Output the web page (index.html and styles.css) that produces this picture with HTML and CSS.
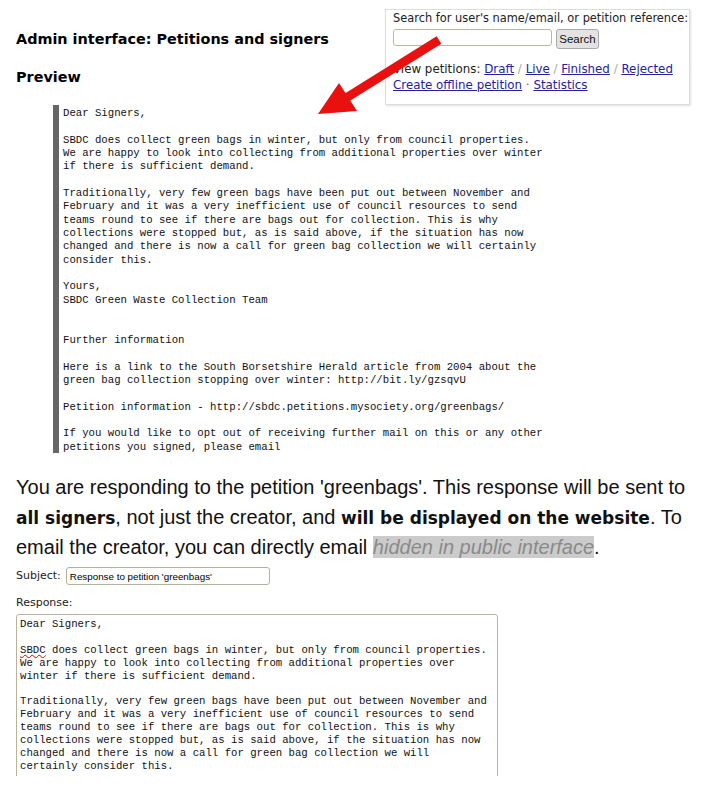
FILE: index.html
```
<!DOCTYPE html>
<html lang="en">
<head>
<meta charset="utf-8">
<title>Admin interface: Petitions and signers</title>
<link rel="stylesheet" href="styles.css">
</head>
<body>
<div class="page">
  <header class="top">
    <div class="titles">
      <h1 class="title">Admin interface: Petitions and signers</h1>
      <h2 class="subtitle">Preview</h2>
    </div>
    <div class="adminbox">
      <form class="search">
        <label class="search-label">Search for user's name/email, or petition reference:</label>
        <div class="search-row">
          <input class="search-input" type="text">
          <button class="search-btn" type="button">Search</button>
        </div>
      </form>
      <p class="nav">View petitions: <a href="#">Draft</a> <span class="sep">/</span> <a href="#">Live</a> <span class="sep">/</span> <a href="#">Finished</a> <span class="sep">/</span> <a href="#">Rejected</a></p>
      <p class="nav"><a href="#">Create offline petition</a> <span class="dot">&middot;</span> <a href="#">Statistics</a></p>
    </div>
  </header>

  <pre class="preview">Dear Signers,

SBDC does collect green bags in winter, but only from council properties.
We are happy to look into collecting from additional properties over winter
if there is sufficient demand.

Traditionally, very few green bags have been put out between November and
February and it was a very inefficient use of council resources to send
teams round to see if there are bags out for collection. This is why
collections were stopped but, as is said above, if the situation has now
changed and there is now a call for green bag collection we will certainly
consider this.

Yours,
SBDC Green Waste Collection Team


Further information

Here is a link to the South Borsetshire Herald article from 2004 about the
green bag collection stopping over winter: http://bit.ly/gzsqvU

Petition information - http://sbdc.petitions.mysociety.org/greenbags/

If you would like to opt out of receiving further mail on this or any other
petitions you signed, please email
</pre>

  <p class="intro">You are responding to the petition 'greenbags'. This response will be sent to <strong>all signers</strong>, not just the creator, and <strong>will be displayed on the website</strong>. To email the creator, you can directly email <em class="hidden">hidden in public interface</em>.</p>

  <div class="field-row">
    <label class="field-label">Subject:</label>
    <input class="subject-input" type="text" value="Response to petition 'greenbags'">
  </div>
  <label class="field-label resp-label">Response:</label>
  <div class="resp-clip">
    <div class="resp-area">Dear Signers,

<span class="spell">SBDC</span> does collect green bags in winter, but only from council properties.
We are happy to look into collecting from additional properties over
winter if there is sufficient demand.

Traditionally, very few green bags have been put out between November and
February and it was a very inefficient use of council resources to send
teams round to see if there are bags out for collection. This is why
collections were stopped but, as is said above, if the situation has now
changed and there is now a call for green bag collection we will
certainly consider this.

Yours,
SBDC Green Waste Collection Team</div>
  </div>

  <svg class="arrow" width="709" height="130" viewBox="0 0 709 130">
    <line x1="346" y1="98" x2="439" y2="40" stroke="#ea1010" stroke-width="9"/>
    <polygon points="318,114 339,83 357,111" fill="#ea1010"/>
  </svg>
</div>
</body>
</html>
```
FILE: styles.css
```
* { box-sizing: border-box; }

body {
  margin: 0;
  background: #fff;
  color: #000;
  font-family: "DejaVu Sans", sans-serif;
}

.page {
  position: relative;
  padding: 0 19px 0 16px;
  width: 709px;
}

.top {
  display: flex;
  justify-content: space-between;
  align-items: flex-start;
}

.title, .subtitle {
  font-family: "DejaVu Sans", sans-serif;
  font-weight: bold;
  font-size: 14.4px;
  line-height: 18px;
  margin: 0;
}

.title { margin-top: 30px; }
.subtitle { margin-top: 20px; }

.adminbox {
  margin-top: 9px;
  width: 305px;
  height: 96px;
  border: 1px solid #dcdcdc;
  box-shadow: 1px 1px 2px rgba(0,0,0,0.12);
  padding: 1px 0 0 7px;
  font-size: 11.4px;
  color: #222;
  overflow: hidden;
}

.search { margin: 0; }

.search-label {
  display: block;
  line-height: 15px;
  white-space: nowrap;
}

.search-row {
  display: flex;
  align-items: flex-start;
  gap: 4px;
  margin-top: 3px;
}

.search-input {
  width: 159px;
  height: 17px;
  border: 1px solid #b9b9a2;
  border-radius: 3px;
  padding: 0 3px;
  margin: 0;
  background: #fff;
}

.search-btn {
  width: 43px;
  height: 20px;
  margin: 0;
  padding: 0;
  font-family: "Liberation Sans", Arial, sans-serif;
  font-size: 11.5px;
  color: #111;
  background: #e3e3e3;
  border: 1px solid #a9a9a9;
  border-radius: 3px;
}

.nav {
  margin: 0;
  font-size: 11.85px;
  line-height: 16px;
  white-space: nowrap;
}

.nav:first-of-type { margin-top: 12px; }

.nav a {
  color: #23239c;
  text-decoration: underline;
}

.sep { color: #aaa; }
.dot { color: #777; }

.preview {
  margin: 0 0 0 37px;
  height: 348px;
  overflow: hidden;
  border-left: 6px solid #666;
  padding: 2px 0 0 4px;
  font-family: "Liberation Mono", "Courier New", monospace;
  font-size: 10.67px;
  line-height: 13.35px;
  color: #111;
}

.intro {
  margin: 20px 0 0;
  font-family: "Liberation Sans", Arial, sans-serif;
  font-size: 20px;
  line-height: 29.5px;
  color: #111;
}

.intro strong {
  font-family: "DejaVu Sans", sans-serif;
  font-weight: bold;
  font-size: 17px;
}

.hidden {
  background: #cbcbcb;
  color: #8a8a8a;
  font-style: italic;
}

.field-row {
  display: flex;
  align-items: center;
  gap: 5px;
  margin-top: 4.5px;
}

.field-label {
  font-size: 11px;
  line-height: 14px;
  color: #222;
}

.subject-input {
  width: 204px;
  height: 18px;
  border: 1px solid #b3b39c;
  border-radius: 3px;
  padding: 0 3px;
  margin: 0;
  font-family: "Liberation Sans", Arial, sans-serif;
  font-size: 9.8px;
  color: #000;
}

.resp-label {
  display: block;
  margin-top: 11px;
}

.resp-clip {
  margin-top: 4px;
  width: 482px;
  height: 162px;
  overflow: hidden;
}

.resp-area {
  height: 300px;
  border: 1px solid #b8b49c;
  border-radius: 3px;
  padding: 3px 3px;
  white-space: pre;
  font-family: "Liberation Mono", "Courier New", monospace;
  font-size: 10.67px;
  line-height: 12.9px;
  color: #111;
}

.spell {
  text-decoration: underline wavy #d00;
  text-decoration-thickness: 1px;
  text-underline-offset: 1px;
  text-decoration-skip-ink: none;
}

.arrow {
  position: absolute;
  left: 0;
  top: 0;
  pointer-events: none;
}
```
